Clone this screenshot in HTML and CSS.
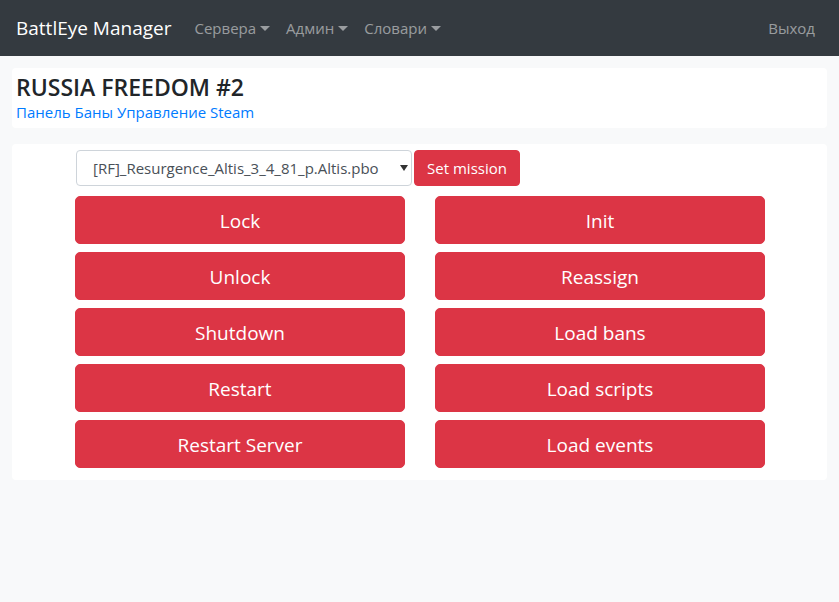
FILE: index.html
```html
<!DOCTYPE html>
<html lang="ru">
<head>
<meta charset="utf-8">
<title>BattlEye Manager</title>
<link rel="stylesheet" href="styles.css">
</head>
<body>
<nav class="navbar">
  <a class="brand" href="#">BattlEye Manager</a>
  <ul class="nav-list">
    <li><a class="nav-link dropdown" href="#">Сервера</a></li>
    <li><a class="nav-link dropdown" href="#">Админ</a></li>
    <li><a class="nav-link dropdown" href="#">Словари</a></li>
  </ul>
  <a class="nav-link logout" href="#">Выход</a>
</nav>
<main class="main">
  <section class="card header-card">
    <h4 class="title">RUSSIA FREEDOM #2</h4>
    <div class="links">
      <a href="#">Панель</a> <a href="#">Баны</a> <a href="#">Управление</a> <a href="#">Steam</a>
    </div>
  </section>
  <section class="card control-card">
    <div class="mission-row">
      <div class="select-wrap">
        <select class="select">
          <option>[RF]_Resurgence_Altis_3_4_81_p.Altis.pbo</option>
        </select>
        <svg class="select-caret" width="8" height="6" viewBox="0 0 8 6"><path d="M0 0h8L4 6z" fill="#333"/></svg>
      </div>
      <button class="btn btn-sm">Set mission</button>
    </div>
    <div class="btn-grid">
      <button class="btn btn-lg">Lock</button>
      <button class="btn btn-lg">Init</button>
      <button class="btn btn-lg">Unlock</button>
      <button class="btn btn-lg">Reassign</button>
      <button class="btn btn-lg">Shutdown</button>
      <button class="btn btn-lg">Load bans</button>
      <button class="btn btn-lg">Restart</button>
      <button class="btn btn-lg">Load scripts</button>
      <button class="btn btn-lg">Restart Server</button>
      <button class="btn btn-lg">Load events</button>
    </div>
  </section>
</main>
</body>
</html>
```
FILE: styles.css
```css
* { box-sizing: border-box; }
html, body { margin: 0; padding: 0; }
body {
  background: #f8f9fa;
  font-family: "Open Sans", "Noto Sans", sans-serif;
  font-size: 16px;
  color: #212529;
  height: 602px;
}
a { text-decoration: none; }
.navbar {
  background: #343a40;
  height: 56px;
  display: flex;
  align-items: center;
  padding: 0 16px;
}
.brand {
  color: #fff;
  font-size: 19px;
  margin-right: 15px;
  line-height: 30px;
}
.nav-list {
  list-style: none;
  display: flex;
  margin: 0;
  padding: 0;
  flex: 1;
}
.nav-link {
  color: rgba(255,255,255,.5);
  padding: 8px;
  font-size: 15px;
  line-height: 24px;
  display: block;
}
.dropdown::after {
  content: "";
  display: inline-block;
  margin-left: 4px;
  vertical-align: 3px;
  border-top: 5px solid;
  border-left: 5px solid transparent;
  border-right: 5px solid transparent;
}
.logout { padding-right: 8px; }
.main { padding: 12px; }
.card {
  background: #fff;
  border-radius: 4px;
}
.header-card {
  padding: 5px 4px 5px;
  margin-bottom: 16px;
}
.title {
  margin: 0;
  font-size: 23px;
  font-weight: 600;
  line-height: 29px;
}
.links {
  font-size: 15px;
  line-height: 21px;
}
.links a { color: #007bff; }
.control-card {
  padding: 6px 62px 12px 63px;
}
.mission-row {
  display: flex;
  gap: 2px;
  margin-left: 1px;
  margin-bottom: 10px;
}
.select-wrap { position: relative; }
.select {
  appearance: none;
  -webkit-appearance: none;
  width: 336px;
  height: 36px;
  border: 1px solid #ced4da;
  border-radius: 4px;
  background: #fff;
  color: #495057;
  font-family: inherit;
  font-size: 15px;
  padding: 0 28px 0 16px;
}
.select-caret {
  position: absolute;
  right: 4px;
  top: 15px;
}
.btn {
  background: #dc3545;
  color: #fff;
  border: 1px solid #dc3545;
  font-family: inherit;
  border-radius: 4px;
  cursor: pointer;
}
.btn-sm {
  height: 36px;
  width: 106px;
  font-size: 15px;
  padding: 0;
}
.btn-grid {
  display: grid;
  grid-template-columns: 330px 330px;
  column-gap: 30px;
  row-gap: 8px;
}
.btn-lg {
  height: 48px;
  font-size: 19px;
  padding: 2px 0 0;
  border-radius: 5px;
}
```
